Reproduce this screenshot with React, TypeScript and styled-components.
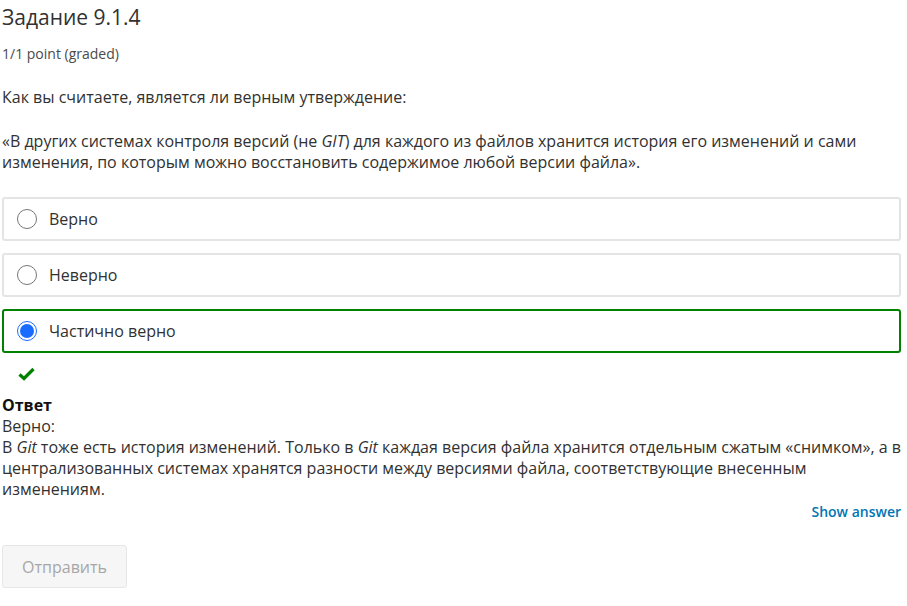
import React from "react";
import styled, { createGlobalStyle } from "styled-components";

const Global = createGlobalStyle`
  html, body { margin: 0; padding: 0; background: #fff; }
  body { font-family: "Open Sans", "Noto Sans", sans-serif; color: #313131; }
`;

const Page = styled.div`
  width: 899px;
  padding: 0 0 0 2px;
  box-sizing: content-box;
`;

const Title = styled.h3`
  margin: 0;
  padding-top: 3px;
  font-size: 21px;
  font-weight: 400;
  line-height: 28px;
  color: #313131;
`;

const Points = styled.div`
  margin-top: 13px;
  font-size: 14px;
  line-height: 20px;
  color: #4a4a4a;
`;

const Para = styled.p`
  margin: 0;
  font-size: 16px;
  line-height: 21px;
  color: #313131;
`;

const Question = styled(Para)`
  margin-top: 23px;
`;

const Quote = styled(Para)`
  margin-top: 23px;
`;

const Options = styled.div`
  margin-top: 24px;
  display: flex;
  flex-direction: column;
  gap: 12px;
`;

const Option = styled.label<{ $correct?: boolean }>`
  display: flex;
  align-items: center;
  gap: 12px;
  height: 44px;
  box-sizing: border-box;
  padding: 0 13px;
  border: 2px solid ${(p) => (p.$correct ? "#008100" : "#e4e4e4")};
  border-radius: 3px;
  font-size: 16px;
  color: #313131;
`;

const Radio = styled.span<{ $checked?: boolean }>`
  width: 20px;
  height: 20px;
  box-sizing: border-box;
  border-radius: 50%;
  border: 1px solid ${(p) => (p.$checked ? "#1a6cff" : "#767676")};
  display: flex;
  align-items: center;
  justify-content: center;
  flex: none;
  &::after {
    content: "";
    display: ${(p) => (p.$checked ? "block" : "none")};
    width: 14px;
    height: 14px;
    border-radius: 50%;
    background: #1a6cff;
  }
`;

const Status = styled.div`
  height: 42px;
  padding-left: 16px;
  display: flex;
  align-items: center;
`;

const Answer = styled.div`
  margin-right: -5px;
  font-size: 16px;
  line-height: 21px;
  color: #313131;
`;

const AnswerHead = styled.div`
  font-weight: 700;
  color: #111;
`;

const Actions = styled.div`
  margin-top: 1px;
  display: flex;
  justify-content: flex-end;
`;

const ShowAnswer = styled.button`
  border: 0;
  background: none;
  padding: 0;
  font-family: inherit;
  font-size: 14px;
  font-weight: 600;
  color: #0075b4;
  line-height: 22px;
  cursor: pointer;
`;

const Submit = styled.button`
  margin-top: 22px;
  width: 125px;
  height: 43px;
  border: 1px solid #e6e6e6;
  border-radius: 3px;
  background: #f6f6f6;
  font-family: inherit;
  font-size: 16px;
  color: #a6a6a6;
`;

export default function App() {
  return (
    <>
      <Global />
      <Page>
        <Title>Задание 9.1.4</Title>
        <Points>1/1 point (graded)</Points>
        <Question>Как вы считаете, является ли верным утверждение:</Question>
        <Quote>
          «В других системах контроля версий (не <i>GIT</i>) для каждого из файлов хранится история его изменений и сами
          изменения, по которым можно восстановить содержимое любой версии файла».
        </Quote>
        <Options>
          <Option>
            <Radio />
            Верно
          </Option>
          <Option>
            <Radio />
            Неверно
          </Option>
          <Option $correct>
            <Radio $checked />
            Частично верно
          </Option>
        </Options>
        <Status>
          <svg width="17" height="14" viewBox="0 0 17 14">
            <path d="M1.5 7.5 L6 11.5 L15.5 2" fill="none" stroke="#008100" strokeWidth="3.2" />
          </svg>
        </Status>
        <Answer>
          <AnswerHead>Ответ</AnswerHead>
          <div>Верно:</div>
          <div>
            В <i>Git</i> тоже есть история изменений. Только в <i>Git</i> каждая версия файла хранится отдельным сжатым «снимком», а в
            централизованных системах хранятся разности между версиями файла, соответствующие внесенным
            изменениям.
          </div>
        </Answer>
        <Actions>
          <ShowAnswer>Show answer</ShowAnswer>
        </Actions>
        <Submit disabled>Отправить</Submit>
      </Page>
    </>
  );
}
